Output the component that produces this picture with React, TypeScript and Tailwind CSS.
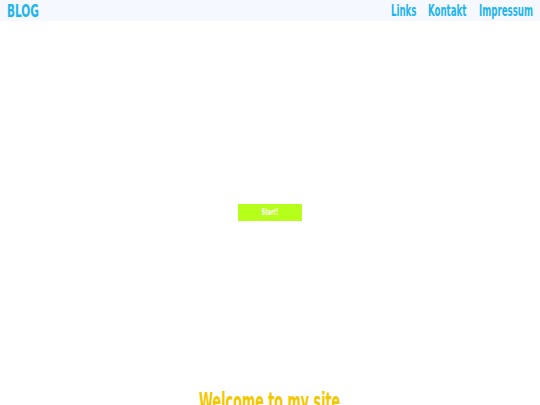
const font = { fontFamily: '"DejaVu Sans Condensed", "Liberation Sans", sans-serif' };

// Schmale Schrift gibt es hier nicht, also wird horizontal gestaucht
const narrow = "inline-block whitespace-nowrap origin-left scale-x-[0.6]";

export default function App() {
  return (
    <div className="min-h-screen overflow-hidden bg-white" style={font}>
      {/* Kopfzeile */}
      <header className="flex h-[21px] items-center justify-between bg-[#f5f8fe] pl-[7px] pr-[7px]">
        <span className="block w-[31px] text-[18px] font-bold leading-none text-[#22b5ec]">
          <span className="inline-block whitespace-nowrap origin-left scale-x-[0.65]">BLOG</span>
        </span>
        <nav className="flex gap-[12px] text-[16px] font-bold leading-none text-[#22b5ec]">
          <a href="#" className="block w-[25px]">
            <span className={narrow}>Links</span>
          </a>
          <a href="#" className="block w-[39px]">
            <span className={narrow}>Kontakt</span>
          </a>
          <a href="#" className="block w-[54px]">
            <span className={narrow}>Impressum</span>
          </a>
        </nav>
      </header>

      {/* Hero */}
      <section className="flex h-[366px] justify-center pt-[183px]">
        <button className="-ml-px h-[17px] w-[64px] bg-[#b5ff1a] text-[8px] font-bold text-white">
          <span className="inline-block scale-x-[0.7]">Start!</span>
        </button>
      </section>

      <section className="text-center">
        <h1 className="text-[24px] font-bold leading-tight text-[#f4c800]">
          <span className="inline-block whitespace-nowrap scale-x-[0.59]">Welcome to my site</span>
        </h1>
      </section>
    </div>
  );
}
